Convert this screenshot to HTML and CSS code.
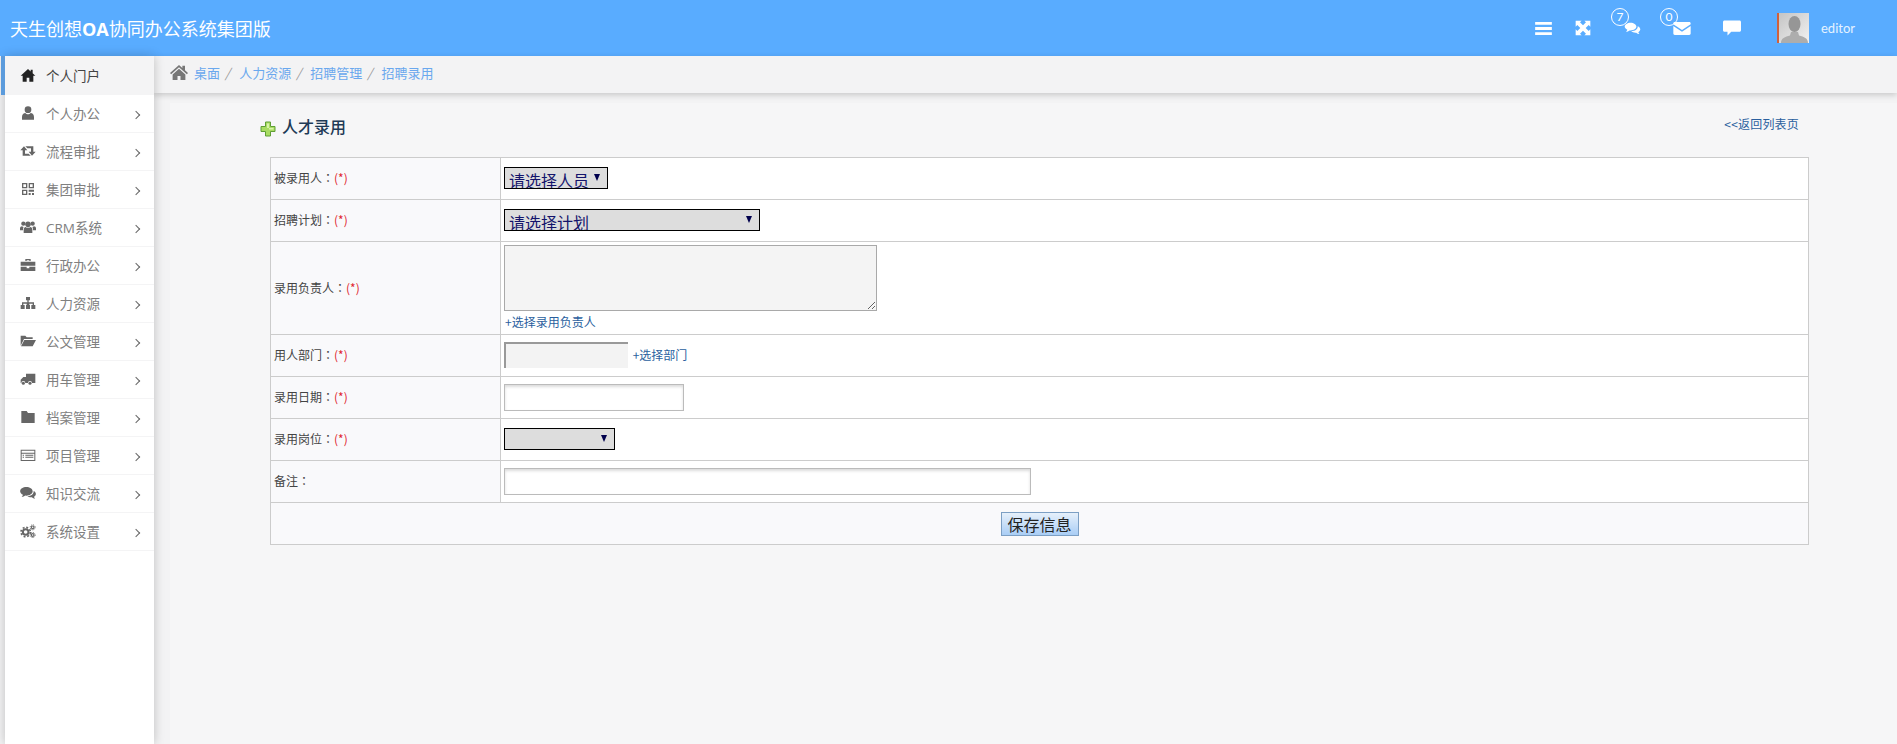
FILE: index.html
```html
<!DOCTYPE html>
<html>
<head>
    <meta charset="utf-8">
    <title>天生创想OA协同办公系统集团版</title>
    <link rel="stylesheet" href="styles.css">
</head>
<body>
    <header class="topbar">
        <div class="brand">天生创想<b>OA</b>协同办公系统集团版</div>
        <div class="tools">
            <svg class="tool tool-bars" viewBox="0 0 18 14"><path d="M0 0h18v3H0zM0 5.500h18v3H0zM0 11h18v3H0z"/></svg>
            <svg class="tool tool-expand" viewBox="0 0 24 24"><path d="M1 1h9L7.500 3.500 12 8l4.500-4.500L14 1h9v9l-2.500-2.500L16 12l4.500 4.500L23 14v9h-9l2.500-2.500L12 16l-4.500 4.500L10 23H1v-9l2.500 2.500L8 12 3.500 7.500 1 10z"/></svg>
            <span class="tool-wrap tool-chat">
                <span class="badge">7</span>
                <svg class="tool" viewBox="0 0 24 20"><path d="M9 1c5 0 9 2.700 9 6s-4 6-9 6l-1.500-.1C6 14.200 4 15 2 15c1-1 1.800-2 2-3.200C1.700 10.700 0 9 0 7c0-3.300 4-6 9-6z"/><path d="M20 6.500c2.400 1 4 2.800 4 4.800 0 1.800-1.100 3.300-3 4.300.2 1 .9 2 1.800 2.900-2 0-3.800-.8-5-2-3.200.3-6-.5-7.800-2.500 5.500.2 10.500-2.700 10-7.500z"/></svg>
            </span>
            <span class="tool-wrap tool-mail">
                <span class="badge">0</span>
                <svg class="tool" viewBox="0 0 24 18"><path d="M2 0h20c1.200 0 2 .8 2 2v1L12 11 0 3V2C0 .8.800 0 2 0z"/><path d="M0 5.500 12 13.500 24 5.500V16c0 1.200-.8 2-2 2H2c-1.200 0-2-.8-2-2z"/></svg>
            </span>
            <svg class="tool tool-note" viewBox="0 0 24 20"><path d="M2 0h20c1.100 0 2 .9 2 2v11c0 1.100-.9 2-2 2H11l-5 5v-5H2c-1.100 0-2-.9-2-2V2C0 .9.900 0 2 0z"/></svg>
            <span class="avatar">
                <svg viewBox="0 0 30 30">
                    <defs>
                        <linearGradient id="avatar-bg" x1="0" y1="0" x2="1" y2="1">
                            <stop offset="0" stop-color="#c4c4c4"/>
                            <stop offset="1" stop-color="#f2f2f2"/>
                        </linearGradient>
                    </defs>
                    <rect width="30" height="30" fill="url(#avatar-bg)"/>
                    <ellipse cx="15.500" cy="11" rx="6" ry="8" fill="#969696"/>
                    <path d="M2 30c0-5 4-6 9-7.500l1-3.500h7l1 3.500c5 1.500 9 2.500 9 7.500z" fill="#adadad"/>
                </svg>
            </span>
            <span class="username">editor</span>
        </div>
    </header>

    <div class="layout">
        <nav class="sidebar">
            <a class="nav-item active">
                <svg class="nav-icon" viewBox="0 0 24 24"><path d="M12 3 1 13h3v9h6v-6h4v6h6v-9h3l-4-3.600V4h-3v2.700z"/></svg>
                <span>个人门户</span>
            </a>
            <a class="nav-item has-sub">
                <svg class="nav-icon" viewBox="0 0 24 24"><circle cx="12" cy="7" r="5"/><path d="M3 22v-4c0-4 2.500-6 5-6 1 1.200 2.500 2 4 2s3-.8 4-2c2.500 0 5 2 5 6v4z"/></svg>
                <span>个人办公</span>
            </a>
            <a class="nav-item has-sub">
                <svg class="nav-icon" viewBox="0 0 24 24"><path d="M6 5 .5 11H4v8h12l-3-3H7.500v-5H11z"/><path d="M18 19l5.500-6H20V5H8l3 3h5.500v5H13z"/></svg>
                <span>流程审批</span>
            </a>
            <a class="nav-item has-sub">
                <svg class="nav-icon" viewBox="0 0 24 24"><path d="M3 3h8v8H3zm2 2v4h4V5zM13 3h8v8h-8zm2 2v4h4V5zM3 13h8v8H3zm2 2v4h4v-4zM13 13h8v3h-8zM13 18h3v3h-3zM18 18h3v3h-3z"/></svg>
                <span>集团审批</span>
            </a>
            <a class="nav-item has-sub">
                <svg class="nav-icon" viewBox="0 0 24 24"><circle cx="5" cy="7" r="3.200"/><circle cx="19" cy="7" r="3.200"/><circle cx="12" cy="8" r="4.200"/><path d="M0 17v-3c0-2 1.500-3 3-3 .8.600 1.500 1 2.500 1-.8 1-1 2.500-1 5zM24 17v-3c0-2-1.500-3-3-3-.8.600-1.500 1-2.500 1 .8 1 1 2.500 1 5zM5.500 21v-5c0-2.500 1.500-4 3-4 1 1 2.200 1.300 3.500 1.300s2.500-.3 3.500-1.300c1.500 0 3 1.500 3 4v5z"/></svg>
                <span>CRM系统</span>
            </a>
            <a class="nav-item has-sub">
                <svg class="nav-icon" viewBox="0 0 24 24"><path d="M1 7h22v6H1zM1 14.500h9V17h4v-2.500h9V21H1zM8 6V3h8v3h-2V5h-4v1z"/></svg>
                <span>行政办公</span>
            </a>
            <a class="nav-item has-sub">
                <svg class="nav-icon" viewBox="0 0 24 24"><path d="M9 3h6v5h-2v3h8v4h-2v-2h-5v2h-4v-2H5v2H3v-4h8V8H9zM1 15h6v6H1zM9 15h6v6H9zM17 15h6v6h-6z"/></svg>
                <span>人力资源</span>
            </a>
            <a class="nav-item has-sub">
                <svg class="nav-icon" viewBox="0 0 24 24"><path d="M1 19V4h7l2 2.500h9V9H6z"/><path d="M6.500 10.500H24L19 20H1.500z"/></svg>
                <span>公文管理</span>
            </a>
            <a class="nav-item has-sub">
                <svg class="nav-icon" viewBox="0 0 24 24"><path d="M9 4h14v14h-5a3 3 0 0 0-6 0H8a3 3 0 0 0-6 0H1v-5l4-4h4z"/><circle cx="5" cy="18.500" r="2.300"/><circle cx="15" cy="18.500" r="2.300"/></svg>
                <span>用车管理</span>
            </a>
            <a class="nav-item has-sub">
                <svg class="nav-icon" viewBox="0 0 24 24"><path d="M2 3h8l2 3h10v15H2z"/></svg>
                <span>档案管理</span>
            </a>
            <a class="nav-item has-sub">
                <svg class="nav-icon" viewBox="0 0 24 24"><path d="M1 4h22v17H1zm1.500 1.500v3h19v-3zm0 4.500v9.500h19V10zM4 11.500h2v1.500H4zM8 11.500h12v1.500H8zM4 14.500h2V16H4zM8 14.500h12V16H8z" fill-rule="evenodd"/></svg>
                <span>项目管理</span>
            </a>
            <a class="nav-item has-sub">
                <svg class="nav-icon" viewBox="0 0 24 24"><path d="M9.500 3c5 0 9.500 2.700 9.500 6.500S14.500 16 9.500 16l-1.500-.1C6.500 17.200 4.500 18 2.500 18c1-1 1.800-2 2-3.200C2 13.700.2 11.700.2 9.500.2 5.700 4.500 3 9.500 3z"/><path d="M20.500 9c2 1 3.300 2.600 3.300 4.500 0 1.800-1 3.200-2.800 4.200.2 1 .8 1.900 1.600 2.800-2 0-3.600-.8-4.800-2-2.800.3-5.200-.5-6.800-2 5.200.2 10-2.800 9.500-7.500z"/></svg>
                <span>知识交流</span>
            </a>
            <a class="nav-item has-sub">
                <svg class="nav-icon" viewBox="0 0 24 24">
                    <g fill="none" stroke="#666">
                        <circle cx="8.500" cy="13.500" r="4.200" stroke-width="3"/>
                        <circle cx="8.500" cy="13.500" r="7" stroke-width="2.500" stroke-dasharray="2.900 2.600"/>
                        <circle cx="19" cy="6.500" r="2" stroke-width="1.700"/>
                        <circle cx="19" cy="6.500" r="3.700" stroke-width="1.500" stroke-dasharray="1.600 1.300"/>
                        <circle cx="19" cy="18" r="2" stroke-width="1.700"/>
                        <circle cx="19" cy="18" r="3.700" stroke-width="1.500" stroke-dasharray="1.600 1.300"/>
                    </g>
                </svg>
                <span>系统设置</span>
            </a>
        </nav>

        <main class="main">
            <div class="crumbs">
                <svg class="crumb-home" viewBox="0 0 24 20"><path d="M12 0 0 10.500l1.500 1.700L12 3l10.500 9.200 1.500-1.700-4-3.500V1h-3.500v3z"/><path d="M12 5 3.500 12.500V20H10v-5.500h4V20h6.500v-7.500z"/></svg>
                <a>桌面</a><i>/</i>
                <a>人力资源</a><i>/</i>
                <a>招聘管理</a><i>/</i>
                <a>招聘录用</a>
            </div>

            <section class="panel">
                <div class="panel-head">
                    <h2 class="panel-title">
                        <svg class="plus-icon" viewBox="0 0 16 16"><path d="M5.500 1h5v4.500H15v5h-4.500V15h-5v-4.500H1v-5h4.500z" fill="#a8dc62" stroke="#5f9e35"/><path d="M7 2.500h2V7h4.500v1.500H9V7H7z" fill="#d8f3a8"/></svg>
                        人才录用
                    </h2>
                    <a class="back-link">&lt;&lt;返回列表页</a>
                </div>

                <table class="form-table">
                    <tr>
                        <th>被录用人<span class="colon">：</span><em>(*)</em></th>
                        <td><select class="pick pick-person"><option>请选择人员</option></select></td>
                    </tr>
                    <tr>
                        <th>招聘计划<span class="colon">：</span><em>(*)</em></th>
                        <td><select class="pick pick-plan"><option>请选择计划</option></select></td>
                    </tr>
                    <tr class="row-tall">
                        <th>录用负责人<span class="colon">：</span><em>(*)</em></th>
                        <td class="cell-owners">
                            <textarea class="owners" disabled></textarea>
                            <a class="form-link form-link-block">+选择录用负责人</a>
                        </td>
                    </tr>
                    <tr>
                        <th>用人部门<span class="colon">：</span><em>(*)</em></th>
                        <td class="cell-inline">
                            <input class="dept" type="text" disabled>
                            <a class="form-link">+选择部门</a>
                        </td>
                    </tr>
                    <tr>
                        <th>录用日期<span class="colon">：</span><em>(*)</em></th>
                        <td><input class="field field-date" type="text"></td>
                    </tr>
                    <tr>
                        <th>录用岗位<span class="colon">：</span><em>(*)</em></th>
                        <td><select class="pick pick-post"><option></option></select></td>
                    </tr>
                    <tr>
                        <th>备注<span class="colon">：</span></th>
                        <td><input class="field field-note" type="text"></td>
                    </tr>
                    <tr>
                        <td class="form-actions" colspan="2"><button class="save" type="button">保存信息</button></td>
                    </tr>
                </table>
            </section>
        </main>
    </div>
</body>
</html>
```

FILE: styles.css
```css
* { box-sizing: border-box; }

html, body { height: 100%; }

body {
    margin: 0;
    overflow: hidden;
    background: #f3f3f4;
    font-family: "Open Sans", "Noto Sans CJK SC", sans-serif;
    font-size: 12px;
    color: #333;
}

/* top bar */
.topbar {
    display: flex;
    align-items: center;
    justify-content: space-between;
    height: 56px;
    padding-left: 10px;
    background: #59acff;
    color: #fff;
}
.brand { font-size: 18px; font-family: "Noto Sans CJK SC", sans-serif; margin-top: -1px; }
.brand b { font-family: "Open Sans", sans-serif; font-weight: 700; }

.tools { display: flex; align-items: center; padding-right: 42px; }
.tool { display: block; fill: #fff; }
.tool-bars { width: 17px; height: 13px; margin-right: 23px; }
.tool-expand { width: 16px; height: 16px; margin-right: 33px; }
.tool-wrap { position: relative; display: block; }
.tool-chat .tool { width: 17px; height: 13px; }
.tool-chat { margin-right: 32px; }
.tool-mail .tool { width: 18px; height: 13px; }
.tool-mail { margin-right: 32px; }
.tool-note { width: 18px; height: 16px; margin-right: 36px; }
.badge {
    position: absolute;
    left: -13px;
    top: -14px;
    width: 18px;
    height: 18px;
    border: 1px solid #fff;
    border-radius: 50%;
    font-family: "Lato", sans-serif;
    font-size: 12px;
    line-height: 16px;
    text-align: center;
}
.avatar {
    display: block;
    width: 32px;
    height: 30px;
    border-left: 2px solid #d0603c;
    margin-right: 12px;
}
.avatar svg { display: block; width: 30px; height: 30px; }
.username { font-family: "Lato", sans-serif; font-size: 13px; color: #e6f3ff; }

/* sidebar */
.layout { display: flex; height: calc(100% - 56px); }
.sidebar {
    flex: 0 0 149px;
    margin-left: 5px;
    background: #fff;
    box-shadow: 0 0 10px rgba(0, 0, 0, 0.22);
    position: relative;
}
.nav-item {
    display: flex;
    align-items: center;
    height: 38px;
    padding-left: 15px;
    padding-bottom: 2px;
    border-bottom: 1px solid #f4f4f5;
    font-family: "Open Sans", "Noto Sans CJK SC", sans-serif;
    font-size: 13.500px;
    color: #808080;
}
.nav-item.active {
    height: 39px;
    margin-left: -4px;
    border-bottom: 0;
    border-left: 4px solid #5b9bdc;
    background: #f4f4f5;
    color: #444;
}
.nav-icon { flex: none; width: 16px; height: 16px; margin-right: 10px; fill: #666; }
.active .nav-icon { fill: #222; }
.has-sub::after {
    content: "";
    width: 5px;
    height: 5px;
    margin-left: auto;
    margin-right: 15px;
    margin-top: 4px;
    border-top: 1px solid #666;
    border-right: 1px solid #666;
    transform: rotate(45deg);
}

/* main area */
.main { flex: 1; display: flex; flex-direction: column; min-width: 0; }
.crumbs {
    display: flex;
    align-items: center;
    height: 37px;
    padding-left: 16px;
    padding-bottom: 4px;
    background: #f3f3f4;
    box-shadow: 0 2px 6px rgba(0, 0, 0, 0.18);
    font-family: "Noto Sans CJK SC", sans-serif;
    font-size: 13px;
    color: #6aa8ee;
}
.crumb-home { width: 18px; height: 15px; margin-right: 6px; fill: #777; }
.crumbs i { margin: 0 9px 0 5px; color: #999; font-style: italic; }

.panel {
    flex: 1;
    margin: 10px 0 0 16px;
    padding: 12px 88px 0 90px;
    background: #f6f6f7;
}
.panel-head { display: flex; justify-content: space-between; height: 42px; margin-right: 10px; }
.panel-title {
    display: flex;
    align-items: center;
    height: 21px;
    margin: 0;
    font-family: "Noto Sans CJK SC", sans-serif;
    font-size: 16px;
    font-weight: 500;
    color: #1f3a56;
}
.plus-icon { width: 16px; height: 16px; margin-right: 6px; margin-top: 6px; }
.back-link {
    font-family: "Noto Sans CJK SC", sans-serif;
    font-size: 12px;
    color: #2a5f9e;
    letter-spacing: 0.2px;
}

/* form */
.form-table {
    width: 1539px;
    margin-left: 10px;
    border-collapse: collapse;
    table-layout: fixed;
    font-family: "Noto Sans CJK SC", sans-serif;
}
.form-table tr { height: 42px; }
.form-table .row-tall { height: 93px; }
.form-table th, .form-table td {
    padding: 0 3px;
    border: 1px solid #ccc;
}
.form-table th {
    width: 230px;
    padding-bottom: 2px;
    background: #f9f9fb;
    font-size: 12px;
    font-weight: 400;
    text-align: left;
    color: #444;
}
.form-table td { background: #fff; }
.form-table em { font-style: normal; color: #e0252e; }
.colon { font-family: "Noto Sans CJK TC", sans-serif; }

.pick {
    display: block;
    appearance: none;
    height: 22px;
    margin-bottom: 2px;
    padding: 2px 0 0 4px;
    border: 1px solid #000;
    border-radius: 0;
    background: #ddd url("data:image/svg+xml,%3Csvg xmlns='http://www.w3.org/2000/svg' width='6' height='7'%3E%3Cpath d='M0 0h6L3 7z' fill='%2300004d'/%3E%3C/svg%3E") no-repeat right 7px top 6px;
    font-family: "Noto Sans CJK SC", sans-serif;
    font-size: 16px;
    line-height: 20px;
    color: #14146b;
}
.pick-person { width: 104px; }
.pick-plan { width: 256px; }
.pick-post { width: 111px; }

.form-table .cell-owners { padding-bottom: 4px; }
.owners {
    display: block;
    width: 373px;
    height: 66px;
    margin-top: 3px;
    border: 1px solid #a9a9a9;
    background: #f4f4f4;
}
.form-link { color: #2a5f9e; font-size: 12px; }
.form-link-block { display: block; margin-top: 3px; padding-left: 1px; line-height: 16px; }

.form-table .cell-inline { padding-bottom: 2px; }
.cell-inline .dept, .cell-inline .form-link { vertical-align: middle; }
.cell-inline .form-link { margin-left: 2px; }
.dept {
    width: 124px;
    height: 26px;
    padding: 0;
    border: 0;
    border-top: 2px solid #999;
    border-left: 2px solid #999;
    background: #f3f3f3;
}
.field {
    display: block;
    height: 27px;
    padding: 0 4px;
    border: 1px solid #bbb;
    background: #fff;
    box-shadow: inset 0 2px 3px rgba(0, 0, 0, 0.14);
}
.field-date { width: 180px; }
.field-note { width: 527px; }

.form-table .form-actions { background: #f9f9fb; text-align: center; }
.save {
    width: 78px;
    height: 24px;
    padding: 0;
    border: 1px solid #7c9fc4;
    background: linear-gradient(#e6f0fb, #a9cdf5);
    font-family: "Noto Sans CJK SC", sans-serif;
    font-size: 16px;
    line-height: 20px;
    color: #222;
}
```
